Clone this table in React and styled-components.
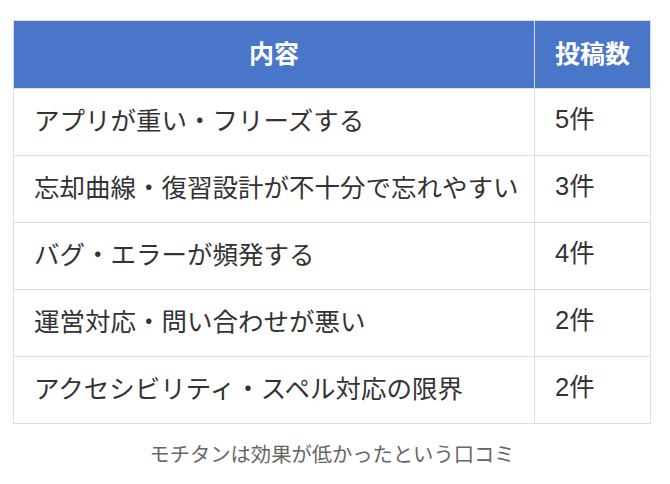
import styled, { createGlobalStyle } from "styled-components";

const GlobalStyle = createGlobalStyle`
    body {
        margin: 0;
        background: #ffffff;
        font-family: "Noto Sans CJK JP", sans-serif;
    }
`

const Figure = styled.figure`
    margin: 20px 0 0 13px;
    width: 638px;
`
const Table = styled.table`
    width: 100%;
    border-collapse: collapse;
    border: 1px solid #dddddd;
    table-layout: fixed;
`
const HeadCell = styled.th`
    background-color: #4a76ca;
    color: #ffffff;
    font-size: 25px;
    font-weight: 700;
    line-height: 1.2;
    height: 68px;
    padding: 0 20px 6px;
    text-align: center;
    width: ${props => props.$width || "auto"};
    border-left: ${props => props.$divider ? "1px solid #dddddd" : "none"};
    box-sizing: border-box;
`
const Cell = styled.td`
    color: #333333;
    font-family: ${props => props.$numeric ? '"Liberation Sans", "Noto Sans CJK JP", sans-serif' : '"Noto Sans CJK JP", sans-serif'};
    font-size: 25.5px;
    line-height: 1.2;
    height: 67px;
    padding: 0 20px 6px;
    border-top: 1px solid #dddddd;
    border-left: ${props => props.$numeric ? "1px solid #dddddd" : "none"};
    white-space: nowrap;
    box-sizing: border-box;
`
const Caption = styled.figcaption`
    margin-top: 17px;
    text-align: center;
    color: #666666;
    font-size: 20.3px;
    line-height: 1.2;
`

const rows = [
    { text: "アプリが重い・フリーズする", count: 5 },
    { text: "忘却曲線・復習設計が不十分で忘れやすい", count: 3 },
    { text: "バグ・エラーが頻発する", count: 4 },
    { text: "運営対応・問い合わせが悪い", count: 2 },
    { text: "アクセシビリティ・スペル対応の限界", count: 2 },
]

export default function App() {
    return (
        <>
            <GlobalStyle />
            <Figure>
                <Table>
                    <thead>
                        <tr>
                            <HeadCell>内容</HeadCell>
                            <HeadCell $width="116px" $divider>投稿数</HeadCell>
                        </tr>
                    </thead>
                    <tbody>
                        {rows.map(row => (
                            <tr key={row.text}>
                                <Cell>{row.text}</Cell>
                                <Cell $numeric>{row.count}件</Cell>
                            </tr>
                        ))}
                    </tbody>
                </Table>
                <Caption>モチタンは効果が低かったという口コミ</Caption>
            </Figure>
        </>
    )
}
